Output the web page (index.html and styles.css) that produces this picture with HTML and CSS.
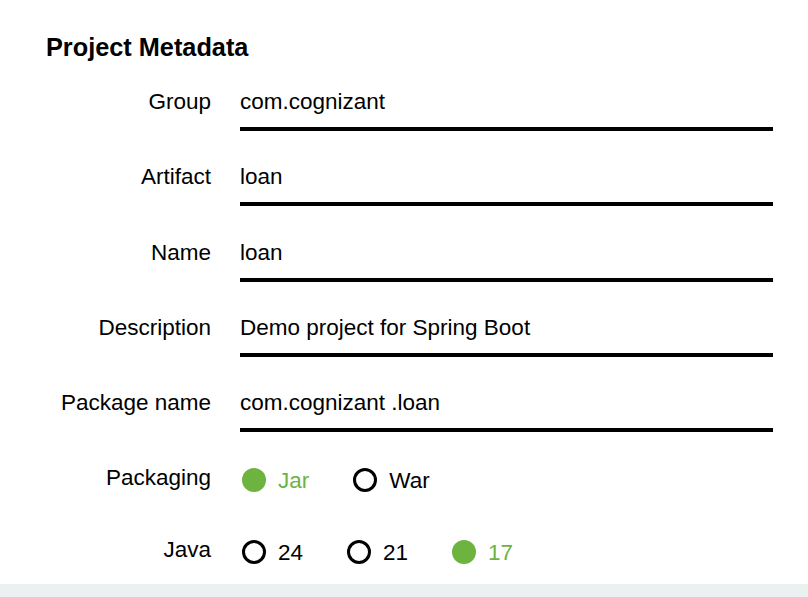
FILE: index.html
```html
<!DOCTYPE html>
<html lang="en">
<head>
<meta charset="utf-8">
<title>Project Metadata</title>
<link rel="stylesheet" href="styles.css">
</head>
<body>
<main class="panel">
  <h2 class="title">Project Metadata</h2>
  <div class="fields">
    <div class="row">
      <div class="label">Group</div>
      <div class="field">com.cognizant</div>
    </div>
    <div class="row">
      <div class="label">Artifact</div>
      <div class="field">loan</div>
    </div>
    <div class="row">
      <div class="label">Name</div>
      <div class="field">loan</div>
    </div>
    <div class="row">
      <div class="label">Description</div>
      <div class="field">Demo project for Spring Boot</div>
    </div>
    <div class="row">
      <div class="label">Package name</div>
      <div class="field">com.cognizant .loan</div>
    </div>
  </div>
  <div class="radio-row first">
    <div class="label">Packaging</div>
    <div class="radios">
      <span class="radio checked"><span class="dot"></span>Jar</span>
      <span class="radio"><span class="dot"></span>War</span>
    </div>
  </div>
  <div class="radio-row">
    <div class="label">Java</div>
    <div class="radios">
      <span class="radio"><span class="dot"></span>24</span>
      <span class="radio"><span class="dot"></span>21</span>
      <span class="radio checked"><span class="dot"></span>17</span>
    </div>
  </div>
</main>
<div class="bar"></div>
</body>
</html>
```
FILE: styles.css
```css
html, body {
  margin: 0;
  padding: 0;
  background: #fff;
}
body {
  font-family: "Liberation Sans", Arial, sans-serif;
  font-size: 22.5px;
  color: #000;
  overflow: hidden;
}
.panel {
  padding: 32px 0 16px 0;
}
.title {
  margin: 0 0 25px 46px;
  font-size: 25.3px;
  font-weight: bold;
  line-height: 30px;
}
.fields {
  display: flex;
  flex-direction: column;
  gap: 31.25px;
}
.row {
  display: flex;
  align-items: flex-start;
}
.label {
  width: 211px;
  flex: none;
  text-align: right;
  line-height: 30px;
  margin-right: 29px;
}
.field {
  width: 533px;
  line-height: 30px;
  padding-bottom: 10px;
  border-bottom: 4px solid #000;
  white-space: nowrap;
}
.radio-row {
  display: flex;
  align-items: flex-start;
  height: 32px;
  margin-top: 40px;
}
.radio-row.first {
  margin-top: 32px;
}
.radio-row .label {
  line-height: 28px;
}
.radios {
  display: flex;
  align-items: center;
  height: 32px;
  padding-left: 2px;
}
.radio {
  display: flex;
  align-items: center;
  margin-right: 44px;
  line-height: 32px;
  position: relative;
  top: 1px;
}
.dot {
  width: 24px;
  height: 24px;
  box-sizing: border-box;
  border: 3px solid #000;
  border-radius: 50%;
  margin-right: 12px;
  position: relative;
  top: -1px;
}
.radio.checked {
  color: #6db33f;
}
.radio.checked .dot {
  border: none;
  background: #6db33f;
}
.bar {
  height: 13px;
  background: #ebf1f0;
}
```
